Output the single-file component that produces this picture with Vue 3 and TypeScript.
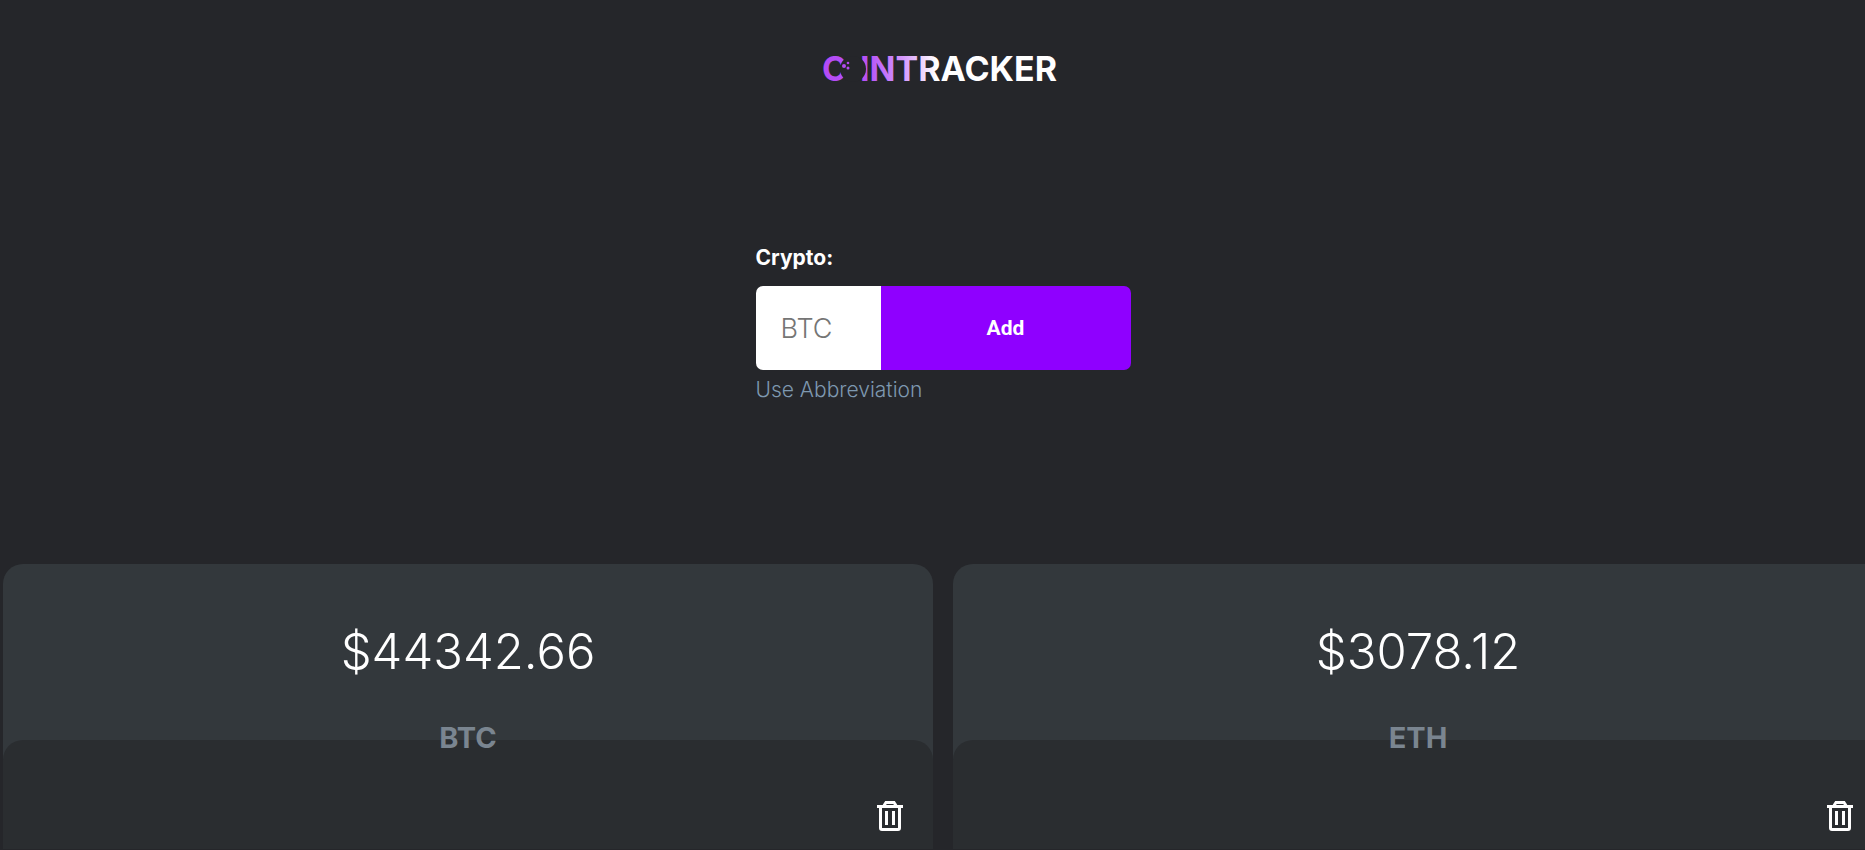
<script setup lang="ts">
import { ref } from 'vue'

interface Coin {
  symbol: string
  price: string
}

const ticker = ref('')
const coins = ref<Coin[]>([
  { symbol: 'BTC', price: '44342.66' },
  { symbol: 'ETH', price: '3078.12' },
])

function addCoin() {
  const symbol = ticker.value.trim().toUpperCase()
  if (symbol && !coins.value.some((c) => c.symbol === symbol)) {
    coins.value.push({ symbol, price: '0.00' })
  }
  ticker.value = ''
}

function removeCoin(symbol: string) {
  coins.value = coins.value.filter((c) => c.symbol !== symbol)
}
</script>

<template>
  <div class="page">
    <div class="content">
      <header class="header">
        <svg class="logo" width="244" height="48" viewBox="0 0 244 48" role="img" aria-label="CoinTracker">
          <defs>
            <linearGradient id="brand" gradientUnits="userSpaceOnUse" x1="0" y1="0" x2="240" y2="0">
              <stop offset="0" stop-color="#b44af5" />
              <stop offset="0.2" stop-color="#b654f8" />
              <stop offset="0.34" stop-color="#d598fc" />
              <stop offset="0.48" stop-color="#ffffff" />
            </linearGradient>
          </defs>
          <g class="wordmark" fill="url(#brand)">
            <text x="1" y="36">C</text>
            <text x="39" y="36">INTRACKER</text>
          </g>
          <circle cx="32" cy="24" r="13" fill="#25262a" />
          <g fill="#b44af5">
            <circle cx="23" cy="21" r="2" />
            <circle cx="27" cy="18" r="1.3" />
            <circle cx="27" cy="23" r="1.5" />
          </g>
        </svg>
      </header>

      <form class="form" @submit.prevent="addCoin">
        <label class="label" for="ticker">Crypto:</label>
        <div class="field">
          <input id="ticker" v-model="ticker" class="input" type="text" placeholder="BTC" aria-describedby="hint" />
          <button class="add" type="submit">Add</button>
        </div>
        <small id="hint" class="hint">Use Abbreviation</small>
      </form>

      <main class="cards">
        <article v-for="coin in coins" :key="coin.symbol" class="card">
          <p class="price">${{ coin.price }}</p>
          <footer class="panel">
            <h2 class="symbol">{{ coin.symbol }}</h2>
            <button class="remove" type="button" :aria-label="`Remove ${coin.symbol}`" @click="removeCoin(coin.symbol)">
              <svg width="26" height="30" viewBox="0 0 26 30" fill="none" stroke="#fff">
                <path d="M0 5.500H26" stroke-width="3" />
                <path d="M7 4.500L9 1.500H17L19 4.500" stroke-width="3" />
                <path d="M3.500 6V27Q3.500 28.500 5 28.500H21Q22.500 28.500 22.500 27V6" stroke-width="3" />
                <path d="M9.500 10V24M16.500 10V24" stroke-width="3" />
              </svg>
            </button>
          </footer>
        </article>
      </main>
    </div>
  </div>
</template>

<style>
body {
  margin: 0;
  background: #25262a;
}
</style>

<style scoped>
.page {
  min-height: 100vh;
  overflow: hidden;
  background: #25262a;
  color: #fff;
  font-family: Inter, 'Liberation Sans', sans-serif;
}

/* The card row runs past the right edge of the window. */
.content {
  margin-left: 3px;
  margin-right: -18px;
}

.header {
  display: flex;
  justify-content: center;
  padding-top: 45px;
}

.logo {
  display: block;
}

.wordmark {
  font-family: Inter, 'Liberation Sans', sans-serif;
  font-size: 34px;
  font-weight: 700;
}

.form {
  width: 375px;
  margin: 153px auto 0;
}

.label {
  display: block;
  font-size: 21px;
  line-height: 24px;
  font-weight: 700;
}

.field {
  display: flex;
  height: 84px;
  margin-top: 16px;
  border-radius: 7px;
  overflow: hidden;
}

.input {
  box-sizing: border-box;
  width: 125px;
  padding: 0 25px;
  border: 0;
  outline: 0;
  background: #fff;
  color: #25262a;
  font: 300 27px Inter, 'Liberation Sans', sans-serif;
}

.input::placeholder {
  color: #757575;
  opacity: 1;
}

.add {
  flex: 1;
  border: 0;
  background: #8f00ff;
  color: #fff;
  font: 700 21px Roboto, 'Liberation Sans', sans-serif;
  cursor: pointer;
}

.hint {
  display: block;
  margin-top: 8px;
  color: #7e98b0;
  font-size: 21px;
  line-height: 24px;
  font-weight: 300;
}

.cards {
  display: grid;
  grid-template-columns: 1fr 1fr;
  gap: 20px;
  margin-top: 162px;
}

.card {
  border-radius: 20px;
  background: #33383c;
  text-align: center;
}

.price {
  margin: 0;
  padding: 56px 0;
  font-size: 49px;
  line-height: 64px;
  font-weight: 300;
}

.panel {
  display: flex;
  flex-direction: column;
  height: 109px;
  border-radius: 20px 20px 0 0;
  background: #2a2d30;
}

.symbol {
  margin: -20px 0 0;
  color: #7a8590;
  font-size: 29px;
  line-height: 36px;
  font-weight: 700;
}

.remove {
  align-self: flex-end;
  margin: 45px 30px 0;
  padding: 0;
  border: 0;
  background: none;
  cursor: pointer;
}

.remove svg {
  display: block;
}
</style>
